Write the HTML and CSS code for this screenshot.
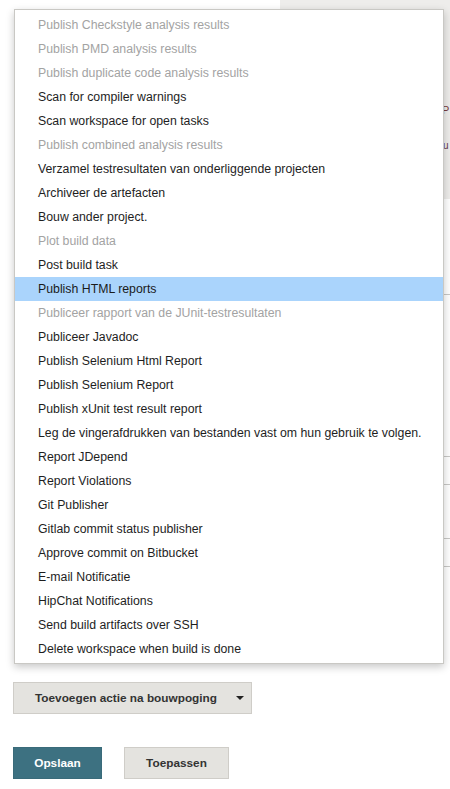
FILE: index.html
```html
<!DOCTYPE html>
<html>
<head>
<meta charset="utf-8">
<link rel="stylesheet" href="styles.css">
</head>
<body>
<div class="page">
  <div class="backdrop">
    <div class="side">
      <div class="side-top">
        <span class="side-p">P</span>
        <span class="side-u">u</span>
      </div>
      <div class="side-rest">
        <div class="rule r1"></div>
        <div class="rule r2"></div>
        <div class="rule r3"></div>
        <div class="rule r4"></div>
        <div class="rule r5"></div>
      </div>
    </div>
  </div>

  <ul class="menu">
    <li class="item disabled">Publish Checkstyle analysis results</li>
    <li class="item disabled">Publish PMD analysis results</li>
    <li class="item disabled">Publish duplicate code analysis results</li>
    <li class="item">Scan for compiler warnings</li>
    <li class="item">Scan workspace for open tasks</li>
    <li class="item disabled">Publish combined analysis results</li>
    <li class="item">Verzamel testresultaten van onderliggende projecten</li>
    <li class="item">Archiveer de artefacten</li>
    <li class="item">Bouw ander project.</li>
    <li class="item disabled">Plot build data</li>
    <li class="item">Post build task</li>
    <li class="item active">Publish HTML reports</li>
    <li class="item disabled">Publiceer rapport van de JUnit-testresultaten</li>
    <li class="item">Publiceer Javadoc</li>
    <li class="item">Publish Selenium Html Report</li>
    <li class="item">Publish Selenium Report</li>
    <li class="item">Publish xUnit test result report</li>
    <li class="item">Leg de vingerafdrukken van bestanden vast om hun gebruik te volgen.</li>
    <li class="item">Report JDepend</li>
    <li class="item">Report Violations</li>
    <li class="item">Git Publisher</li>
    <li class="item">Gitlab commit status publisher</li>
    <li class="item">Approve commit on Bitbucket</li>
    <li class="item">E-mail Notificatie</li>
    <li class="item">HipChat Notifications</li>
    <li class="item">Send build artifacts over SSH</li>
    <li class="item">Delete workspace when build is done</li>
  </ul>

  <div class="actions">
    <button class="btn btn-add"><span class="btn-label">Toevoegen actie na bouwpoging</span><span class="caret"></span></button>
    <div class="save-row">
      <button class="btn btn-primary">Opslaan</button>
      <button class="btn btn-apply">Toepassen</button>
    </div>
  </div>
</div>
</body>
</html>
```
FILE: styles.css
```css
* { box-sizing: border-box; }
html, body { margin: 0; padding: 0; background: #fff; }
body {
  font-family: "Liberation Sans", Arial, sans-serif;
  font-size: 12.3px;
  color: #222;
  width: 450px;
  height: 789px;
  overflow: hidden;
}
.page { position: relative; }

.backdrop {
  height: 682px;
  display: flex;
  justify-content: flex-end;
}
.side {
  width: 170px;
  display: flex;
  flex-direction: column;
}
.side-top {
  height: 199px;
  background: #eeedeb;
  position: relative;
  overflow: hidden;
}
.side-p { position: absolute; left: 162px; top: 104px; color: #7a3b3b; font-size: 11px; }
.side-u { position: absolute; left: 163px; top: 140px; color: #6b3b52; font-size: 10px; }
.side-rest {
  flex: 1;
  background: #fff;
  position: relative;
}
.rule { position: absolute; left: 160px; right: 0; height: 1px; background: #c8c8c6; }
.r1 { top: 95px; }
.r2 { top: 257px; }
.r3 { top: 285px; }
.r4 { top: 339px; }
.r5 { top: 367px; }

.menu {
  position: absolute;
  left: 14px;
  top: 9px;
  width: 430px;
  margin: 0;
  padding: 3px 0 2px;
  list-style: none;
  background: #fff;
  border: 1px solid #c9c8c4;
  box-shadow: 0 3px 8px rgba(0,0,0,0.22);
}
.item {
  height: 24px;
  line-height: 24px;
  padding-left: 23px;
  white-space: nowrap;
  color: #1e1e1e;
}
.item.disabled { color: #a3a3a3; }
.item.active { background: #aad4fc; color: #1b1b1b; }

.actions {
  padding-left: 13px;
  display: flex;
  flex-direction: column;
  align-items: flex-start;
}
.btn {
  font-family: "Liberation Sans", Arial, sans-serif;
  font-weight: bold;
  font-size: 11.8px;
  height: 32px;
  border: 1px solid #cfcdc8;
  background: #e4e3df;
  color: #333;
  padding: 0;
  white-space: nowrap;
  cursor: pointer;
}
.btn-add {
  width: 239px;
  padding-left: 21px;
  display: flex;
  align-items: center;
}
.btn-label { width: 201px; text-align: left; }
.caret {
  width: 0; height: 0;
  border-left: 4px solid transparent;
  border-right: 4px solid transparent;
  border-top: 4px solid #222;
}
.save-row {
  margin-top: 33px;
  display: flex;
  gap: 22px;
}
.btn-primary {
  width: 89px;
  background: #3d7181;
  border-color: #3a6b7a;
  color: #fff;
}
.btn-apply {
  width: 105px;
}
```
